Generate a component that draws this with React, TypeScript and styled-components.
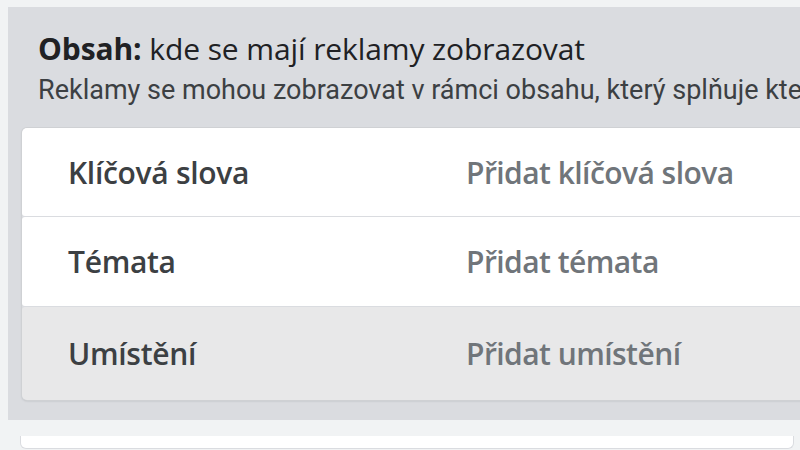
import React from "react";
import styled, { createGlobalStyle } from "styled-components";

const Global = createGlobalStyle`
  html, body { margin: 0; padding: 0; background: #f1f3f4; }
  body { width: 800px; height: 450px; overflow: hidden; }
  #root { width: 800px; height: 450px; }
`;

const Page = styled.div`
  width: 800px;
  height: 450px;
  overflow: hidden;
  background: #f1f3f4;
  padding: 7px 0 0 8px;
  box-sizing: border-box;
  display: flex;
  flex-direction: column;
`;

const Panel = styled.section`
  width: 900px;
  background: #dadce0;
  padding: 0 0 20px 14px;
  box-sizing: border-box;
  flex-shrink: 0;
`;

const Header = styled.header`
  padding: 25px 0 0 16px;
  height: 121px;
  box-sizing: border-box;
  overflow: hidden;
`;

const Title = styled.h2`
  margin: 0;
  font-family: "Open Sans", "Noto Sans", sans-serif;
  font-size: 30px;
  line-height: 34px;
  font-weight: 500;
  color: #202124;
  white-space: nowrap;
  letter-spacing: -0.1px;
  & strong { font-weight: 700; }
`;

const Subtitle = styled.p`
  margin: 8px 0 0;
  font-family: Roboto, "Liberation Sans", sans-serif;
  font-size: 27px;
  line-height: 32px;
  color: #3c4043;
  white-space: nowrap;
`;

const Card = styled.div`
  display: flex;
  flex-direction: column;
  gap: 1px;
  background: #dadce0;
  border-radius: 5px;
  box-shadow: 0 0 0 1px #cfd1d4, 0 1px 2px rgba(60, 64, 67, 0.25);
  overflow: hidden;
`;

const Row = styled.div<{ $muted?: boolean; $h: number }>`
  display: grid;
  grid-template-columns: 398px 1fr;
  align-items: center;
  height: ${(p) => p.$h}px;
  padding-left: 46px;
  background: ${(p) => (p.$muted ? "#e8e8e9" : "#ffffff")};
  border-radius: 3px;
`;

const Label = styled.span`
  font-family: "Open Sans", "Noto Sans", sans-serif;
  font-size: 30px;
  font-weight: 600;
  color: #3c4043;
  white-space: nowrap;
  letter-spacing: -0.3px;
`;

const Value = styled(Label)`
  color: #70757a;
  letter-spacing: -0.55px;
`;

const Footer = styled.div`
  margin: 16px 0 0 12px;
  width: 772px;
  height: 12px;
  background: #ffffff;
  border: 1px solid #dadce0;
  border-top: none;
  border-radius: 0 0 6px 6px;
`;

const rows = [
  { label: "Klíčová slova", value: "Přidat klíčová slova", h: 88 },
  { label: "Témata", value: "Přidat témata", h: 89 },
  { label: "Umístění", value: "Přidat umístění", h: 93, muted: true },
];

export default function App() {
  return (
    <>
      <Global />
      <Page>
        <Panel>
          <Header>
            <Title>
              <strong>Obsah:</strong> kde se mají reklamy zobrazovat
            </Title>
            <Subtitle>
              Reklamy se mohou zobrazovat v rámci obsahu, který splňuje kte
            </Subtitle>
          </Header>
          <Card>
            {rows.map((r) => (
              <Row key={r.label} $h={r.h} $muted={r.muted}>
                <Label>{r.label}</Label>
                <Value>{r.value}</Value>
              </Row>
            ))}
          </Card>
        </Panel>
        <Footer />
      </Page>
    </>
  );
}
